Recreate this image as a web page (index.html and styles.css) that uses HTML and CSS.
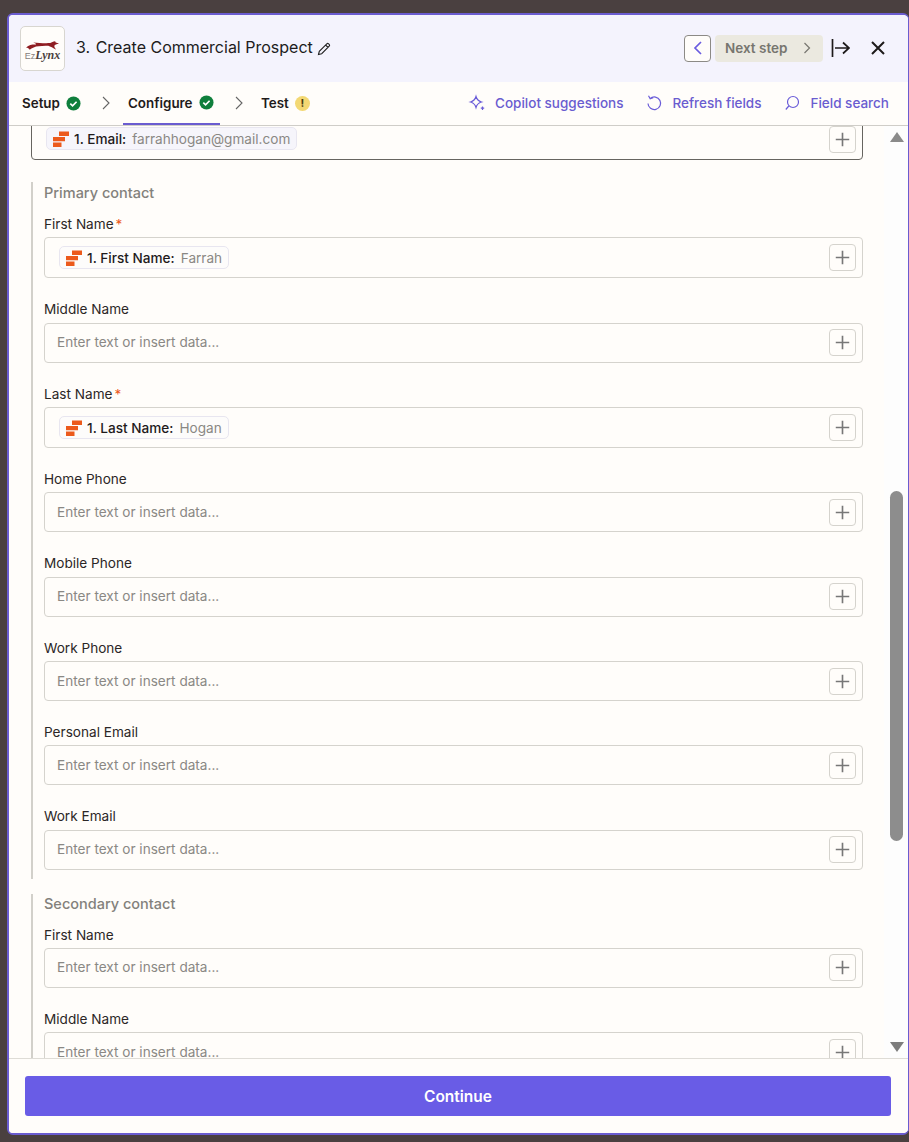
FILE: index.html
```html
<!DOCTYPE html>
<html lang="en">
<head>
<meta charset="utf-8">
<title>Create Commercial Prospect</title>
<link rel="stylesheet" href="styles.css">
</head>
<body>
<svg class="defs" width="0" height="0" aria-hidden="true">
  <symbol id="zap" viewBox="0 0 16 16">
    <path fill="#ec5a1c" d="M6 .5h10v4.500H6zM0 6h12v4.300H0zM0 11.500h8.500V16H0z" />
  </symbol>
  <symbol id="plus" viewBox="0 0 26 26">
    <path fill="none" stroke="#777" stroke-width="1.700" d="M13 6v14M6 13h14"/>
  </symbol>
  <symbol id="check" viewBox="0 0 16 16">
    <circle cx="8" cy="8" r="7.500" fill="#0f7f3c"/>
    <path fill="none" stroke="#fff" stroke-width="1.800" d="M4.600 8.200l2.400 2.300 4.300-4.400"/>
  </symbol>
</svg>
<div class="panel">
  <header class="head">
    <div class="logo">
      <svg class="cat" viewBox="0 0 34 9"><path fill="#8f1d22" d="M0 6.500C3 4 6 3.500 9 3.500 11 3.500 11 2.500 7.500 1.300 13 2 20 2.300 25 2 26.500 1 28 .5 30 0l.6 1.300L34 2.500l-3.300.9c-2.200.8-2 2.600.3 5.100-3-1.200-6-3-8-3.700-4-.4-7 .2-10 .5C9.500 5.500 6 7 3.800 9 3.200 7.500 1.800 6.800 0 6.500z"/></svg>
      <span class="logo-text"><span class="ez">Ez</span><span class="lynx">Lynx</span></span>
    </div>
    <h1 class="title"><span class="step">3.</span> Create Commercial Prospect</h1>
    <svg class="pencil" viewBox="0 0 14 14"><path fill="none" stroke="#222" stroke-width="1.100" d="M1.500 12.500l.8-3.200L9.800 1.800a1.300 1.300 0 0 1 1.800 0l.6.6a1.300 1.300 0 0 1 0 1.800L4.700 11.700zM8.600 3l2.400 2.400"/></svg>
    <div class="head-actions">
      <button class="prev" aria-label="Previous step"><svg viewBox="0 0 10 16"><path fill="none" stroke="#6a5ce0" stroke-width="1.700" d="M8 2L2 8l6 6"/></svg></button>
      <div class="next"><span>Next step</span><svg viewBox="0 0 8 12"><path fill="none" stroke="#77766f" stroke-width="1.200" d="M1.500 1l5 5-5 5"/></svg></div>
      <svg class="dock" viewBox="0 0 20 18"><path fill="none" stroke="#1d1a1a" stroke-width="1.700" d="M1.500 0v18M4 9h14M12 3.500L18 9l-6 5.500"/></svg>
      <svg class="close" viewBox="0 0 14 14"><path fill="none" stroke="#1d1a1a" stroke-width="2" d="M1 1l12 12M13 1L1 13"/></svg>
    </div>
  </header>
  <nav class="tabs">
    <div class="tab tab-setup"><span>Setup</span><svg class="status"><use href="#check"/></svg></div>
    <svg class="sep" viewBox="0 0 8 14"><path fill="none" stroke="#666" stroke-width="1.100" d="M1 1l6 6-6 6"/></svg>
    <div class="tab tab-active"><span>Configure</span><svg class="status"><use href="#check"/></svg></div>
    <svg class="sep" viewBox="0 0 8 14"><path fill="none" stroke="#666" stroke-width="1.100" d="M1 1l6 6-6 6"/></svg>
    <div class="tab tab-test"><span>Test</span><span class="warn">!</span></div>
    <div class="tools">
      <div class="tool"><svg class="tool-icon" viewBox="0 0 18 18"><path fill="none" stroke="#6a5cd8" stroke-width="1.200" d="M8 2.500c.8 2.800 2.700 4.700 5.500 5.500-2.800.8-4.700 2.700-5.500 5.500C7.200 10.700 5.300 8.800 2.500 8 5.300 7.200 7.200 5.300 8 2.500zM14.500 12.500v3.500M12.800 14.200h3.400"/></svg><span>Copilot suggestions</span></div>
      <div class="tool"><svg class="tool-icon" viewBox="0 0 18 18"><path fill="none" stroke="#6a5cd8" stroke-width="1.200" d="M5.200 4.500A6.300 6.300 0 1 1 3 9.500M3.500 1.800l1.700 2.900 3-1"/></svg><span>Refresh fields</span></div>
      <div class="tool"><svg class="tool-icon" viewBox="0 0 18 18"><circle cx="10" cy="8" r="5.500" fill="none" stroke="#6a5cd8" stroke-width="1.200"/><path fill="none" stroke="#6a5cd8" stroke-width="1.200" d="M5.800 12L2.800 15.500"/></svg><span>Field search</span></div>
    </div>
  </nav>
  <div class="body-row">
    <main class="form">
      <div class="box box-email">
        <span class="chip"><svg class="zap"><use href="#zap"/></svg><b>1. Email:</b><span class="val">farrahhogan@gmail.com</span></span>
        <button class="add" aria-label="Insert data"><svg><use href="#plus"/></svg></button>
      </div>
      <section class="group group-primary">
        <h2 class="group-title">Primary contact</h2>
        <div class="field"><label>First Name<i>*</i></label>
          <div class="box box-filled"><span class="chip"><svg class="zap"><use href="#zap"/></svg><b>1. First Name:</b><span class="val">Farrah</span></span><button class="add" aria-label="Insert data"><svg><use href="#plus"/></svg></button></div></div>
        <div class="field"><label>Middle Name</label>
          <div class="box"><span class="ph">Enter text or insert data...</span><button class="add" aria-label="Insert data"><svg><use href="#plus"/></svg></button></div></div>
        <div class="field"><label>Last Name<i>*</i></label>
          <div class="box box-filled"><span class="chip"><svg class="zap"><use href="#zap"/></svg><b>1. Last Name:</b><span class="val">Hogan</span></span><button class="add" aria-label="Insert data"><svg><use href="#plus"/></svg></button></div></div>
        <div class="field"><label>Home Phone</label>
          <div class="box"><span class="ph">Enter text or insert data...</span><button class="add" aria-label="Insert data"><svg><use href="#plus"/></svg></button></div></div>
        <div class="field"><label>Mobile Phone</label>
          <div class="box"><span class="ph">Enter text or insert data...</span><button class="add" aria-label="Insert data"><svg><use href="#plus"/></svg></button></div></div>
        <div class="field"><label>Work Phone</label>
          <div class="box"><span class="ph">Enter text or insert data...</span><button class="add" aria-label="Insert data"><svg><use href="#plus"/></svg></button></div></div>
        <div class="field"><label>Personal Email</label>
          <div class="box"><span class="ph">Enter text or insert data...</span><button class="add" aria-label="Insert data"><svg><use href="#plus"/></svg></button></div></div>
        <div class="field"><label>Work Email</label>
          <div class="box"><span class="ph">Enter text or insert data...</span><button class="add" aria-label="Insert data"><svg><use href="#plus"/></svg></button></div></div>
      </section>
      <section class="group group-secondary">
        <h2 class="group-title">Secondary contact</h2>
        <div class="field"><label>First Name</label>
          <div class="box"><span class="ph">Enter text or insert data...</span><button class="add" aria-label="Insert data"><svg><use href="#plus"/></svg></button></div></div>
        <div class="field"><label>Middle Name</label>
          <div class="box"><span class="ph">Enter text or insert data...</span><button class="add" aria-label="Insert data"><svg><use href="#plus"/></svg></button></div></div>
      </section>
    </main>
    <aside class="scrollbar">
      <span class="arrow-up"></span>
      <span class="thumb"></span>
      <span class="arrow-down"></span>
    </aside>
  </div>
  <footer class="foot"><button class="continue">Continue</button></footer>
</div>
</body>
</html>
```
FILE: styles.css
```css
* { box-sizing: border-box; }
html, body { margin: 0; height: 1142px; overflow: hidden; }
body {
  background: #4a4040;
  padding: 13px 0 7px 7px;
  font-family: Inter, "Liberation Sans", sans-serif;
  color: #1f1b1b;
}
.defs { position: absolute; }
.panel {
  height: 1122px;
  width: 902px;
  background: #fffdfa;
  border: 2px solid #6a5cd0;
  border-right-width: 1px;
  border-radius: 6px;
  display: flex;
  flex-direction: column;
  overflow: hidden;
}
.head {
  height: 67px;
  flex: none;
  background: #f4f3fd;
  display: flex;
  align-items: center;
  padding: 0 23px 1px 11px;
}
.logo {
  width: 45px;
  height: 45px;
  background: #fffdfa;
  border: 1px solid #d8d6d0;
  border-radius: 5px;
  display: flex;
  flex-direction: column;
  align-items: center;
  justify-content: center;
  padding-top: 6px;
}
.cat { width: 33px; height: 9px; flex: none; }
.logo-text { font-size: 12px; line-height: 10px; margin-top: 0; white-space: nowrap; }
.ez { font-family: "Liberation Sans", sans-serif; color: #85807c; font-size: 9px; }
.lynx { font-family: "Liberation Serif", serif; font-style: italic; font-weight: 700; color: #4b4140; }
.title {
  margin: 0 0 2px 11px;
  font-size: 16px;
  font-weight: 400;
  line-height: 20px;
  color: #201c1c;
}
.step { margin-right: 1px; }
.pencil { width: 14px; height: 14px; margin: 2px 0 0 4px; }
.head-actions { margin-left: auto; display: flex; align-items: center; }
.prev {
  width: 27px;
  height: 27px;
  padding: 0;
  background: #fffdfa;
  border: 1px solid #8c8a86;
  border-radius: 4px;
  display: flex;
  align-items: center;
  justify-content: center;
}
.prev svg { width: 10px; height: 16px; }
.next {
  width: 108px;
  height: 27px;
  margin-left: 4px;
  background: #ebe9e0;
  border-radius: 4px;
  display: flex;
  align-items: center;
  justify-content: space-between;
  padding: 0 12px 0 10px;
  font-size: 13.500px;
  font-weight: 600;
  color: #77766f;
}
.next svg { width: 8px; height: 12px; }
.dock { width: 20px; height: 18px; margin-left: 8px; }
.close { width: 14px; height: 14px; margin-left: 20px; }
.tabs {
  height: 44px;
  flex: none;
  display: flex;
  align-items: flex-start;
  border-bottom: 1px solid #cfcdc8;
  padding-left: 13px;
  font-size: 13.400px;
  font-weight: 600;
}
.tabs > .sep { margin-top: 14px; }
.tab { display: flex; align-items: center; gap: 6px; height: 42px; }
.tab-setup { width: 80px; }
.tab-active { width: 97px; height: 43px; padding: 0 0 0 5px; border-bottom: 2px solid #6a5cd0; }
.tab-test { margin-left: 18px; }
.sep { width: 8px; height: 14px; flex: none; }
.tab-active + .sep { margin-left: 15px; }
.tab-setup + .sep { margin-right: 13px; }
.status { width: 15px; height: 15px; }
.warn {
  width: 15px;
  height: 15px;
  border-radius: 50%;
  background: #f3d873;
  color: #4a3c10;
  font-size: 11px;
  font-weight: 700;
  text-align: center;
  line-height: 15px;
}
.tools { margin-left: auto; display: flex; align-items: center; height: 42px; gap: 22px; padding-right: 19px; font-size: 13.500px; font-weight: 500; color: #6a5cd0; }
.tool { display: flex; align-items: center; gap: 9px; }
.tool-icon { width: 18px; height: 18px; }
.body-row { flex: 1; min-height: 0; display: flex; overflow: hidden; }
.form { width: 875px; flex: none; padding-left: 22px; overflow: hidden; }
.box {
  width: 819px;
  height: 40px;
  border: 1px solid #d5d3cd;
  border-radius: 4px;
  display: flex;
  align-items: center;
  justify-content: space-between;
  padding: 0 6px 0 12px;
  background: #fffdfa;
}
.box-filled { height: 41px; padding-left: 14px; }
.box-email {
  width: 832px;
  height: 46px;
  margin-top: -12px;
  border-color: #66645f;
  padding: 3px 6px 0 14px;
}
.chip {
  display: inline-flex;
  align-items: center;
  height: 23px;
  border: 1px solid #e8e6f0;
  border-radius: 5px;
  background: #fdfcfb;
  padding: 0 6px 0 6px;
  font-size: 13.600px;
  color: #1f1b1b;
}
.chip b { font-weight: 500; font-size: 13.600px; }
.box-email .chip { background: #f6f5fb; height: 23px; }
.box-email .add { margin-top: 1px; }
.zap { width: 16px; height: 16px; margin-right: 5px; }
.val { margin-left: 6px; font-weight: 400; color: #8a8884; }
.add {
  width: 27px;
  height: 27px;
  padding: 0;
  background: #fffdfa;
  border: 1px solid #d5d3cd;
  border-radius: 4px;
  flex: none;
}
.add svg { display: block; width: 25px; height: 25px; }
.group {
  border-left: 2px solid #d2d0ca;
  padding-left: 11px;
}
.group-primary { margin-top: 22px; padding-top: 1px; height: 696.500px; }
.group-secondary { margin-top: 15px; }
.group-title {
  margin: 0;
  font-size: 14.500px;
  line-height: 20px;
  font-weight: 500;
  color: #83817c;
}
.field { margin-bottom: 20.950px; }
.group-title + .field { margin-top: 11px; }
.field label {
  display: block;
  font-size: 13.600px;
  line-height: 20px;
  font-weight: 400;
  margin-bottom: 3.400px;
  color: #2b2626;
}
.field label i { font-style: normal; color: #ec5a1c; margin-left: 2px; }
.ph { font-size: 13.600px; color: #8a8884; margin-bottom: 1px; }
.scrollbar {
  flex: 1;
  background: #fdfdfd;
  display: flex;
  flex-direction: column;
  align-items: center;
  padding: 6px 0 6px 1px;
}
.arrow-up, .arrow-down { width: 0; height: 0; border-left: 7.500px solid transparent; border-right: 7.500px solid transparent; }
.arrow-up { border-bottom: 10px solid #8a8a8a; }
.arrow-down { border-top: 10px solid #7d7d7d; }
.thumb { width: 13px; height: 350px; margin: 349px 0 auto; background: #8d8d8d; border-radius: 6.500px; }
.foot {
  height: 75px;
  flex: none;
  border-top: 1px solid #dedcd6;
  padding: 17px 16px 0 16px;
  background: #fffdfa;
}
.continue {
  width: 866px;
  height: 40px;
  border: 0;
  border-radius: 3px;
  background: #695ce6;
  color: #fff;
  font-family: Inter, "Liberation Sans", sans-serif;
  font-size: 15.500px;
  font-weight: 600;
}
```
